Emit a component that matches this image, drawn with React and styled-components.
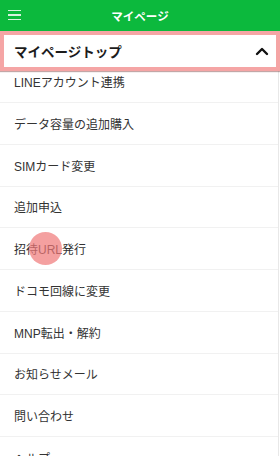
import React from 'react';
import styled, { createGlobalStyle } from 'styled-components';

const GlobalStyle = createGlobalStyle`
  html, body {
    margin: 0;
    padding: 0;
    background: #fff;
    font-family: "Liberation Sans", "Noto Sans CJK JP", sans-serif;
  }
  * {
    box-sizing: border-box;
  }
`;

const Page = styled.div`
  width: 280px;
  height: 456px;
  overflow: hidden;
  position: relative;
  background: #fff;
`;

const TopBar = styled.header`
  height: 31px;
  background: #0cb93d;
  display: flex;
  align-items: center;
  justify-content: center;
  position: relative;
  z-index: 2;
`;

const MenuButton = styled.button`
  position: absolute;
  left: 8px;
  top: 8px;
  width: 13px;
  height: 14px;
  border: 0;
  background: transparent;
  display: flex;
  flex-direction: column;
  justify-content: space-between;
  padding: 2px 0;

  span {
    display: block;
    height: 1.2px;
    background: #d8f3de;
  }
`;

const Title = styled.h1`
  margin: 0;
  color: #fff;
  font-size: 11.5px;
  font-weight: 700;
`;

const SectionHeader = styled.div`
  position: relative;
  z-index: 2;
  height: 40px;
  background: #fff;
  border: 4px solid #f5a5a5;
  box-shadow: 0 1px 1px rgba(120, 60, 60, 0.45);
  display: flex;
  align-items: center;
  justify-content: space-between;
  padding: 0 7px 0 10px;
`;

const SectionTitle = styled.span`
  font-size: 13.5px;
  font-weight: 700;
  color: #1c1c1c;
`;

const List = styled.ul`
  list-style: none;
  margin: -9.75px 1px 0 0;
  padding: 0;
  border-right: 1px solid #e8e8e8;
`;

const Item = styled.li`
  height: 41.75px;
  display: flex;
  align-items: center;
  padding-left: 14px;
  font-size: 12px;
  color: #333;
  border-bottom: 1px solid #f1f1f1;
  position: relative;
`;

const TapMark = styled.span`
  position: absolute;
  left: 29px;
  top: 50%;
  margin-top: -16.5px;
  width: 33px;
  height: 33px;
  border-radius: 50%;
  background: rgba(240, 120, 120, 0.7);
  pointer-events: none;
`;

const items = [
  'LINEアカウント連携',
  'データ容量の追加購入',
  'SIMカード変更',
  '追加申込',
  '招待URL発行',
  'ドコモ回線に変更',
  'MNP転出・解約',
  'お知らせメール',
  '問い合わせ',
  'ヘルプ',
];

const App = () => {
  return (
    <Page>
      <GlobalStyle />
      <TopBar>
        <MenuButton aria-label="menu">
          <span />
          <span />
          <span />
        </MenuButton>
        <Title>マイページ</Title>
      </TopBar>
      <SectionHeader>
        <SectionTitle>マイページトップ</SectionTitle>
        <svg width="14" height="10" viewBox="0 0 14 10">
          <path
            d="M2 8 L7 3 L12 8"
            fill="none"
            stroke="#111"
            strokeWidth="2.4"
            strokeLinecap="round"
            strokeLinejoin="round"
          />
        </svg>
      </SectionHeader>
      <List>
        {items.map((text) => (
          <Item key={text}>
            {text}
            {text === '招待URL発行' && <TapMark />}
          </Item>
        ))}
      </List>
    </Page>
  );
};

export default App;
